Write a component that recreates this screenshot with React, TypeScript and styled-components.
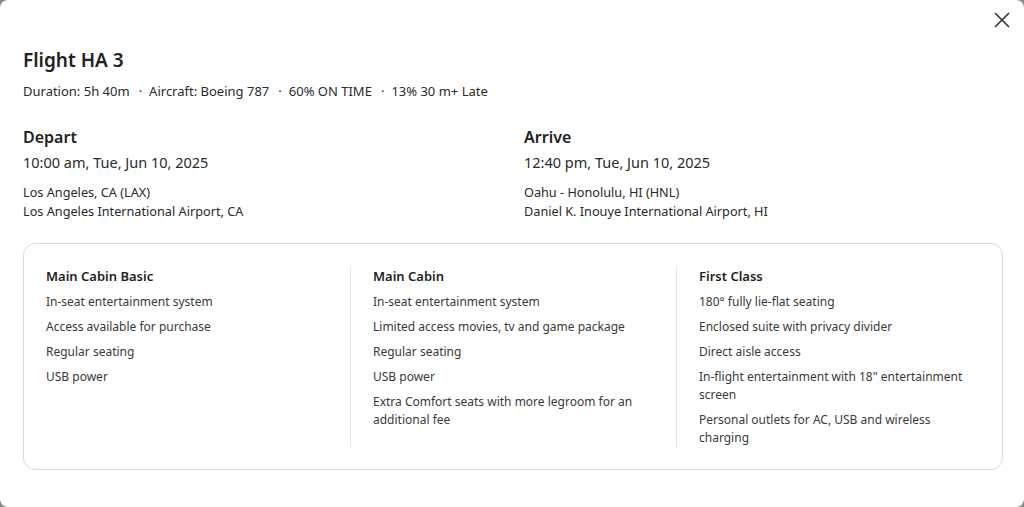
import styled, { createGlobalStyle } from "styled-components";

const GlobalStyle = createGlobalStyle`
    html, body {
        margin: 0;
        padding: 0;
        background: #8a8a8a;
    }
    * {
        box-sizing: border-box;
    }
`;

const Modal = styled.div`
    position: relative;
    width: 1024px;
    height: 507px;
    background: #fff;
    border-radius: 8px;
    padding: 46px 21px 0 23px;
    font-family: "Noto Sans", "Liberation Sans", sans-serif;
    color: #2a2a2a;
`;

const CloseButton = styled.button`
    position: absolute;
    top: 11px;
    right: 13px;
    width: 18px;
    height: 18px;
    padding: 0;
    border: none;
    background: none;
    cursor: pointer;
    color: #333;
`;

const Title = styled.h1`
    margin: 0;
    font-size: 19px;
    line-height: 28px;
    font-weight: 600;
    color: #222;
`;

const Meta = styled.div`
    display: flex;
    align-items: center;
    margin-top: 8px;
    font-size: 13px;
    line-height: 18px;
`;

const Dot = styled.span`
    margin: 0 7px 0 9px;
`;

const Legs = styled.div`
    display: grid;
    grid-template-columns: 501px 1fr;
    margin-top: 26px;
`;

const Leg = styled.div`
    display: flex;
    flex-direction: column;
`;

const LegLabel = styled.div`
    font-size: 16px;
    line-height: 22px;
    font-weight: 600;
    color: #222;
`;

const LegTime = styled.div`
    margin-top: 3px;
    font-size: 14.5px;
    line-height: 22px;
`;

const LegPlace = styled.div`
    margin-top: 10px;
    font-size: 12.7px;
    line-height: 19px;
`;

const CabinCard = styled.div`
    display: grid;
    grid-template-columns: repeat(3, 1fr);
    width: 980px;
    margin-top: 22px;
    padding: 23px 0 22px;
    border: 1px solid #dcdcdc;
    border-radius: 12px;
`;

const Cabin = styled.div<{ $divider?: boolean }>`
    display: flex;
    flex-direction: column;
    gap: 7px;
    padding: 0 22px;
    border-left: ${(p) => (p.$divider ? "1px solid #e4e4e4" : "none")};
`;

const CabinName = styled.div`
    font-size: 13px;
    line-height: 19px;
    font-weight: 600;
    color: #1e1e1e;
`;

const Feature = styled.div`
    font-size: 12px;
    line-height: 18px;
    color: #3a3a3a;
`;

const cabins = [
    {
        name: "Main Cabin Basic",
        features: [
            "In-seat entertainment system",
            "Access available for purchase",
            "Regular seating",
            "USB power",
        ],
    },
    {
        name: "Main Cabin",
        features: [
            "In-seat entertainment system",
            "Limited access movies, tv and game package",
            "Regular seating",
            "USB power",
            "Extra Comfort seats with more legroom for an additional fee",
        ],
    },
    {
        name: "First Class",
        features: [
            "180° fully lie-flat seating",
            "Enclosed suite with privacy divider",
            "Direct aisle access",
            'In-flight entertainment with 18" entertainment screen',
            "Personal outlets for AC, USB and wireless charging",
        ],
    },
];

const App = () => {
    return (
        <>
            <GlobalStyle />
            <Modal>
                <CloseButton aria-label="Close">
                    <svg width="18" height="18" viewBox="0 0 18 18" fill="none" stroke="currentColor" strokeWidth="1.6">
                        <path d="M2 2 L16 16 M16 2 L2 16" />
                    </svg>
                </CloseButton>
                <Title>Flight HA 3</Title>
                <Meta>
                    <span>Duration: 5h 40m</span>
                    <Dot>·</Dot>
                    <span>Aircraft: Boeing 787</span>
                    <Dot>·</Dot>
                    <span>60% ON TIME</span>
                    <Dot>·</Dot>
                    <span>13% 30 m+ Late</span>
                </Meta>
                <Legs>
                    <Leg>
                        <LegLabel>Depart</LegLabel>
                        <LegTime>10:00 am, Tue, Jun 10, 2025</LegTime>
                        <LegPlace>
                            Los Angeles, CA (LAX)
                            <br />
                            Los Angeles International Airport, CA
                        </LegPlace>
                    </Leg>
                    <Leg>
                        <LegLabel>Arrive</LegLabel>
                        <LegTime>12:40 pm, Tue, Jun 10, 2025</LegTime>
                        <LegPlace>
                            Oahu - Honolulu, HI (HNL)
                            <br />
                            Daniel K. Inouye International Airport, HI
                        </LegPlace>
                    </Leg>
                </Legs>
                <CabinCard>
                    {cabins.map((cabin, i) => (
                        <Cabin key={cabin.name} $divider={i > 0}>
                            <CabinName>{cabin.name}</CabinName>
                            {cabin.features.map((f) => (
                                <Feature key={f}>{f}</Feature>
                            ))}
                        </Cabin>
                    ))}
                </CabinCard>
            </Modal>
        </>
    );
};

export default App;
